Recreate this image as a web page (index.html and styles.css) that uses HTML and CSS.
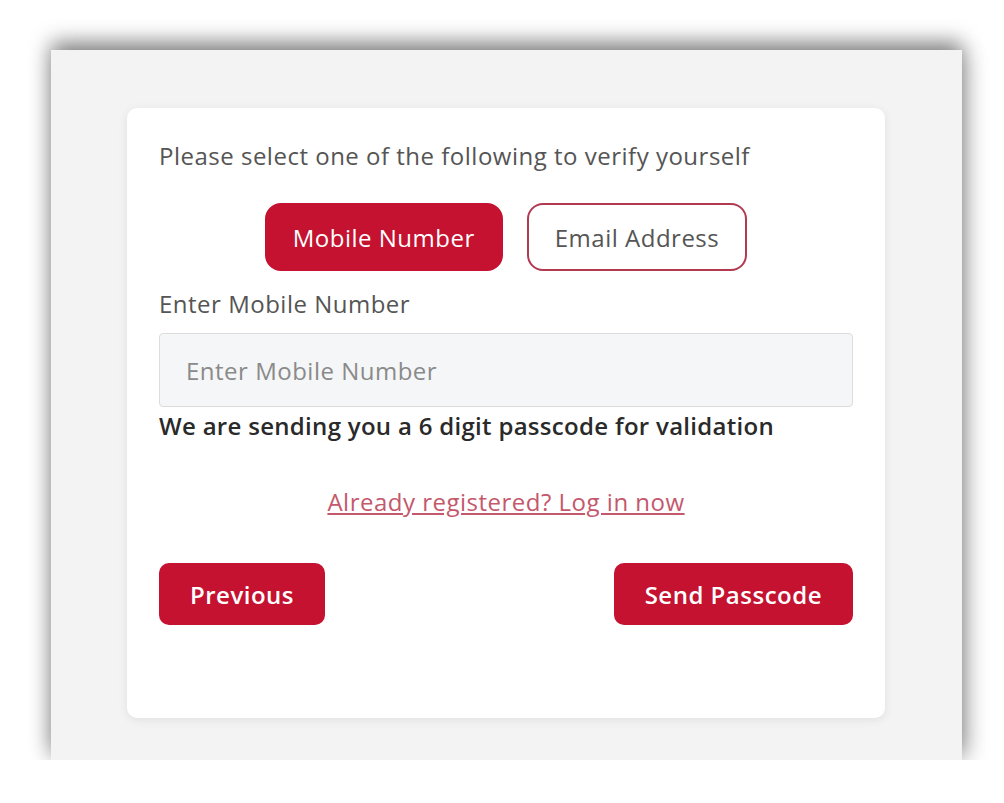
FILE: index.html
```html
<!DOCTYPE html>
<html lang="en">
<head>
    <meta charset="UTF-8">
    <meta name="viewport" content="width=device-width, initial-scale=1.0">
    <title>Verify Yourself</title>
    <link rel="stylesheet" href="styles.css">
</head>
<body>
    <div class="panel">
        <div class="card">
            <p class="intro">Please select one of the following to verify yourself</p>

            <div class="choice-row">
                <button class="choice-button active">Mobile Number</button>
                <button class="choice-button">Email Address</button>
            </div>

            <label class="field-label" for="mobile">Enter Mobile Number</label>
            <input class="field-input" type="text" id="mobile" placeholder="Enter Mobile Number">
            <p class="hint">We are sending you a 6 digit passcode for validation</p>

            <div class="login-row">
                <a href="#" class="login-link">Already registered? Log in now</a>
            </div>

            <div class="action-row">
                <button class="action-button">Previous</button>
                <button class="action-button">Send Passcode</button>
            </div>
        </div>
    </div>
</body>
</html>
```

FILE: styles.css
```css
body {
    margin: 0;
    background-color: #ffffff;
    font-family: "Open Sans", "Noto Sans", Arial, sans-serif;
    letter-spacing: 0.5px;
}
.panel {
    box-sizing: border-box;
    width: 911px;
    height: 710px;
    margin: 50px 0 0 51px;
    padding: 58px 77px 0 76px;
    background-color: #f3f3f3;
    box-shadow: 0 -8px 20px rgba(0, 0, 0, 0.45), 4px 4px 24px rgba(0, 0, 0, 0.18);
}
.card {
    box-sizing: border-box;
    height: 610px;
    padding: 30px 32px 0 32px;
    background-color: #ffffff;
    border-radius: 10px;
    box-shadow: 0 2px 10px rgba(0, 0, 0, 0.08);
    display: flex;
    flex-direction: column;
}
.intro {
    margin: 0;
    font-size: 24px;
    color: #555555;
    line-height: 36px;
}
.choice-row {
    display: flex;
    justify-content: center;
    gap: 24px;
    margin-top: 29px;
}
.choice-button {
    height: 68px;
    padding: 0 26px;
    border-radius: 16px;
    border: 2px solid #b23a50;
    background-color: #ffffff;
    color: #555555;
    font-family: inherit;
    font-size: 24px;
    letter-spacing: 0.5px;
    cursor: pointer;
}
.choice-button.active {
    background-color: #c41230;
    border-color: #c41230;
    color: #ffffff;
}
.field-label {
    margin-top: 18px;
    font-size: 24px;
    line-height: 30px;
    color: #555555;
}
.field-input {
    margin-top: 14px;
    height: 74px;
    box-sizing: border-box;
    padding: 0 26px;
    border: 1px solid #dcdcdc;
    border-radius: 4px;
    background-color: #f5f6f7;
    font-family: inherit;
    font-size: 24px;
    letter-spacing: 0.5px;
    color: #333333;
}
.field-input::placeholder {
    color: #8a8a8a;
}
.hint {
    margin: 4px 0 0 0;
    font-size: 24px;
    font-weight: 600;
    line-height: 30px;
    letter-spacing: 0.3px;
    color: #2a2a2a;
}
.login-row {
    display: flex;
    justify-content: center;
    margin-top: 46px;
}
.login-link {
    font-size: 24px;
    line-height: 30px;
    color: #c4586c;
}
.action-row {
    display: flex;
    justify-content: space-between;
    margin-top: 46px;
}
.action-button {
    height: 62px;
    padding: 0 31px;
    border: none;
    border-radius: 10px;
    background-color: #c41230;
    color: #ffffff;
    font-family: inherit;
    font-size: 24px;
    font-weight: 600;
    letter-spacing: 0.5px;
    cursor: pointer;
}
```
